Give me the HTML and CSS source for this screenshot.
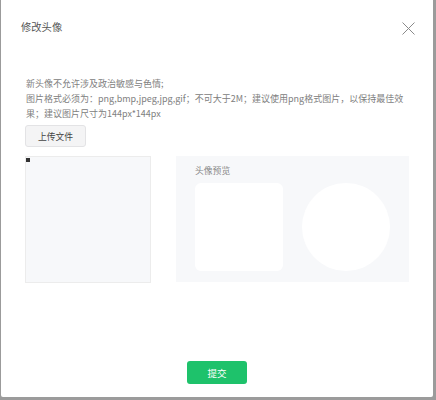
FILE: index.html
```html
<!DOCTYPE html>
<html lang="zh">
  <head>
    <meta charset="UTF-8" />
    <meta name="viewport" content="width=device-width, initial-scale=1.0" />
    <title>修改头像</title>
    <link rel="stylesheet" href="styles.css">
  </head>

  <body>
    <div class="dialog">
      <div class="dialog-header">
        <span class="dialog-title">修改头像</span>
        <span class="dialog-close">
          <svg width="13" height="13" viewBox="0 0 13 13">
            <path d="M0.5 0.5 L12.5 12.5 M12.5 0.5 L0.5 12.5" stroke="#8a8a8a" stroke-width="1" fill="none" />
          </svg>
        </span>
      </div>

      <div class="dialog-body">
        <div class="tips">
          新头像不允许涉及政治敏感与色情;<br />
          图片格式必须为：png,bmp,jpeg,jpg,gif；不可大于2M；建议使用png格式图片，以保持最佳效果；建议图片尺寸为144px*144px
        </div>

        <button class="upload-btn">上传文件</button>

        <div class="editor">
          <div class="crop-box">
            <span class="crop-handle"></span>
          </div>

          <div class="preview">
            <div class="preview-title">头像预览</div>
            <div class="preview-items">
              <div class="preview-square"></div>
              <div class="preview-circle"></div>
            </div>
          </div>
        </div>
      </div>

      <div class="dialog-footer">
        <button class="submit-btn">提交</button>
      </div>
    </div>
  </body>
</html>
```

FILE: styles.css
```css
* {
  margin: 0;
  padding: 0;
  box-sizing: border-box;
}

body {
  font-family: "Noto Sans CJK SC", "Noto Sans", sans-serif;
  background: #9b9b9b;
  height: 100vh;
  overflow: hidden;
}

.dialog {
  margin-left: 1px;
  width: 432px;
  height: 397px;
  background: #fff;
  border-radius: 0 0 2px 2px;
  display: flex;
  flex-direction: column;
}

.dialog-header {
  display: flex;
  justify-content: space-between;
  align-items: flex-start;
  padding: 20px 18px 0 20px;
}

.dialog-title {
  font-size: 10.3px;
  line-height: 14px;
  color: #555;
}

.dialog-close {
  display: block;
  margin-top: -4px;
  height: 13px;
}

.dialog-body {
  padding: 0 24px;
}

.tips {
  margin-top: 42px;
  max-width: 379px;
  padding-left: 1px;
  font-size: 9px;
  line-height: 15px;
  color: #808080;
  word-break: break-all;
}

.upload-btn {
  display: block;
  margin-top: 4px;
  width: 61px;
  height: 22px;
  background: #f4f4f5;
  border: 1px solid #e3e3e5;
  border-radius: 3px;
  font-family: inherit;
  font-size: 8.8px;
  color: #444;
}

.editor {
  display: flex;
  gap: 25px;
  margin-top: 9px;
}

.crop-box {
  position: relative;
  width: 127px;
  height: 127px;
  background: #f7f8fa;
  border: 1px solid #ececec;
}

.crop-handle {
  position: absolute;
  top: 1px;
  left: 0;
  width: 4px;
  height: 4px;
  background: #333;
}

.preview {
  width: 233px;
  height: 126px;
  background: #f7f8fa;
  padding: 8px 19px 0;
}

.preview-title {
  font-size: 8.8px;
  line-height: 14px;
  color: #888;
}

.preview-items {
  display: flex;
  gap: 19px;
  margin-top: 5px;
}

.preview-square {
  width: 88px;
  height: 88px;
  background: #fff;
  border-radius: 6px;
}

.preview-circle {
  width: 88px;
  height: 88px;
  background: #fff;
  border-radius: 50%;
}

.dialog-footer {
  margin-top: auto;
  padding-bottom: 13px;
  display: flex;
  justify-content: center;
}

.submit-btn {
  width: 60px;
  height: 23px;
  background: #1ec26b;
  border: none;
  border-radius: 3px;
  color: #fff;
  font-family: inherit;
  font-size: 9.5px;
}
```
